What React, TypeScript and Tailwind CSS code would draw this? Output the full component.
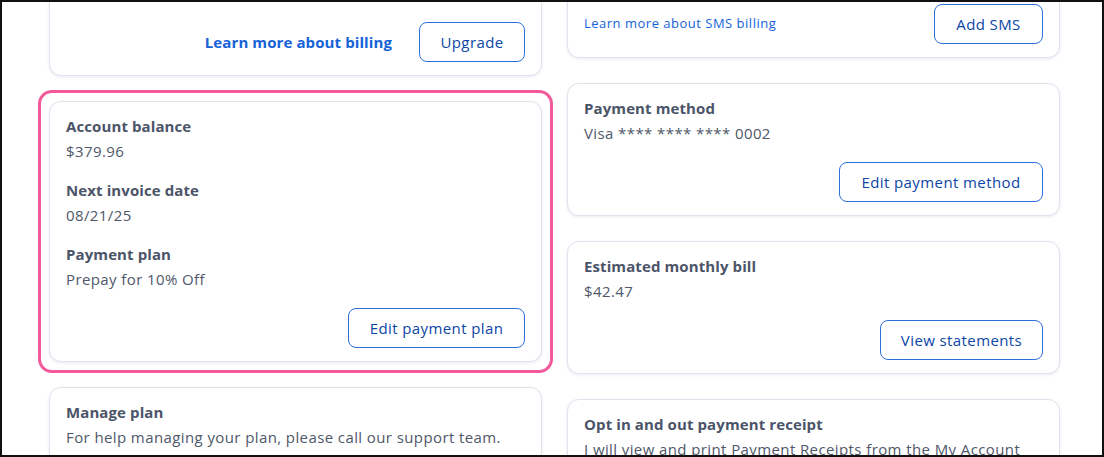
import React from 'react';

const font = { fontFamily: '"Open Sans", "Noto Sans", "Liberation Sans", sans-serif' };

function Card({ children, className = '' }: { children: React.ReactNode; className?: string }) {
  return (
    <div
      className={`rounded-[12px] border border-[#dfe3ee] bg-white shadow-[0_1px_3px_rgba(40,60,110,0.10)] px-[16px] ${className}`}
    >
      {children}
    </div>
  );
}

function Field({ label, value }: { label: string; value: string }) {
  return (
    <div>
      <div className="text-[15px] leading-[25px] font-bold tracking-[0.1px] text-[#4b5468]">{label}</div>
      <div className="text-[15px] leading-[25px] tracking-[0.4px] text-[#4f586a] whitespace-nowrap">{value}</div>
    </div>
  );
}

function OutlineButton({ label, width }: { label: string; width: string }) {
  return (
    <button
      className={`${width} h-[40px] rounded-[8px] border border-[#2b70dc] bg-white text-[15px] tracking-[0.4px] text-[#0c46a6] flex items-center justify-center`}
    >
      {label}
    </button>
  );
}

export default function App() {
  return (
    <div
      style={font}
      className="w-[1104px] h-[457px] border-2 border-[#111] bg-white overflow-hidden"
    >
      <div className="grid grid-cols-[493px_493px] gap-x-[25px] pl-[47px]">
        {/* Left column */}
        <div className="flex flex-col gap-[25px]">
          <Card className="h-[100px] -mt-[26px] flex items-end justify-end pb-[13px]">
            <div className="flex items-center gap-[27px]">
              <a className="text-[15px] font-bold tracking-[0.1px] text-[#1662d8]">Learn more about billing</a>
              <OutlineButton label="Upgrade" width="w-[106px]" />
            </div>
          </Card>

          {/* Highlighted card */}
          <div className="relative">
            <div className="absolute -inset-[11px] rounded-[14px] border-[3px] border-[#f45a9b] pointer-events-none" />
            <Card className="pt-[12px] pb-[13px]">
              <div className="flex flex-col gap-[14px]">
                <Field label="Account balance" value="$379.96" />
                <Field label="Next invoice date" value="08/21/25" />
                <Field label="Payment plan" value="Prepay for 10% Off" />
              </div>
              <div className="flex justify-end mt-[16px]">
                <OutlineButton label="Edit payment plan" width="w-[177px]" />
              </div>
            </Card>
          </div>

          <Card className="pt-[12px] pb-[13px]">
            <Field
              label="Manage plan"
              value="For help managing your plan, please call our support team."
            />
          </Card>
        </div>

        {/* Right column */}
        <div className="flex flex-col gap-[25px]">
          <Card className="h-[80px] -mt-[24px] flex items-end justify-between pb-[13px]">
            <a className="text-[13px] tracking-[0.5px] text-[#1662d8] mb-[11px]">Learn more about SMS billing</a>
            <OutlineButton label="Add SMS" width="w-[109px]" />
          </Card>

          <Card className="pt-[12px] pb-[13px]">
            <Field label="Payment method" value="Visa **** **** **** 0002" />
            <div className="flex justify-end mt-[16px]">
              <OutlineButton label="Edit payment method" width="w-[204px]" />
            </div>
          </Card>

          <Card className="pt-[12px] pb-[13px]">
            <Field label="Estimated monthly bill" value="$42.47" />
            <div className="flex justify-end mt-[16px]">
              <OutlineButton label="View statements" width="w-[163px]" />
            </div>
          </Card>

          <Card className="pt-[12px] pb-[13px]">
            <Field
              label="Opt in and out payment receipt"
              value="I will view and print Payment Receipts from the My Account"
            />
          </Card>
        </div>
      </div>
    </div>
  );
}
